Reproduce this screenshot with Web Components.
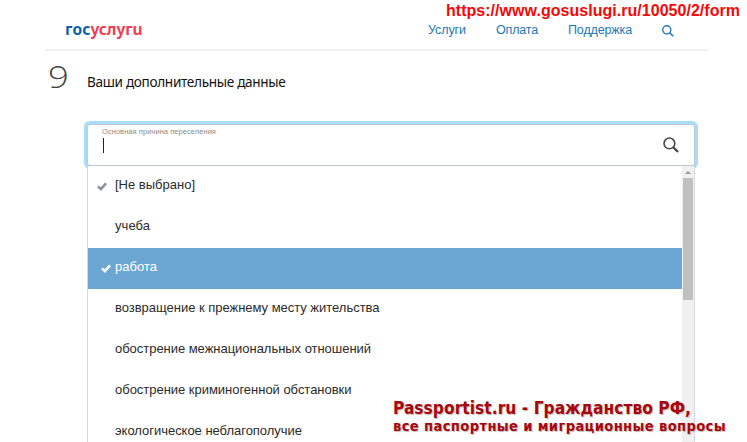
<!DOCTYPE html>
<html lang="ru">
<head>
<meta charset="utf-8">
<title>Госуслуги</title>
<style>
body{margin:0;width:747px;height:442px;overflow:hidden;background:#fff;font-family:"Liberation Sans",Arial,sans-serif}
</style>
</head>
<body>
<form-page></form-page>
<script>
const define=(name,html,init)=>customElements.define(name,class extends HTMLElement{
  connectedCallback(){
    if(this.shadowRoot)return;
    const t=document.createElement('template');
    t.innerHTML=html;
    this.attachShadow({mode:'open'}).append(t.content.cloneNode(true));
    if(init)init(this);
  }
});
// Text line whose tracking is adjusted to span the width given in "w".
define('fit-text',`<style>:host{display:block;white-space:nowrap}span{display:inline-block}</style><span><slot></slot></span>`,el=>{
  const s=el.shadowRoot.querySelector('span'),w=+el.getAttribute('w');
  const n=el.textContent.length;
  s.style.letterSpacing=((w-s.getBoundingClientRect().width)/n).toFixed(4)+'px';
});
define('search-icon',`<style>:host{display:block}svg{display:block;width:100%;height:100%}circle{stroke-width:var(--ring,1.5)}path{stroke-width:var(--handle,1.7)}</style>
<svg viewBox="0 0 16 16" fill="none" stroke="currentColor"><circle cx="6.4" cy="6.4" r="5.4"/><path d="M10.3 10.3L15 15"/></svg>`);
define('check-icon',`<style>:host{display:block;width:10px;height:9px}svg{display:block}</style>
<svg width="10" height="9" viewBox="0 0 10 9"><path d="M1 4.4L3.9 7.2L9 1.4" fill="none" stroke="currentColor" stroke-width="2.5"/></svg>`);
define('site-logo',`<style>:host{display:flex;font:bold 15.5px/20px "Noto Sans","Open Sans",sans-serif;margin-top:-1px}.b{color:#0b62b0}.r{color:#ee3f58}</style>
<fit-text class="b" w="25.5">гос</fit-text><fit-text class="r" w="52">услугu</fit-text>`);
define('site-header',`<style>
:host{display:flex;box-sizing:border-box;width:663px;height:51px;margin-left:45px;border-bottom:2px solid #f0f0f0;padding:20px 34px 0 20px;justify-content:space-between;align-items:flex-start}
nav{display:flex;color:#2277bd;font-size:12.5px;line-height:20px}
fit-text+fit-text{margin-left:30px}
search-icon{width:12px;height:12px;margin:5px 0 0 30px;--ring:1.8;--handle:2.1}
</style><site-logo></site-logo><nav><fit-text w="38">Услуги</fit-text><fit-text w="42">Оплата</fit-text><fit-text w="64">Поддержка</fit-text><search-icon></search-icon></nav>`);
define('step-title',`<style>
:host{display:flex;padding:11px 0 0 48px;height:61px;box-sizing:border-box}
.n{width:39px}
.n span{display:inline-block;transform:scaleX(1.18);transform-origin:0 0;font:300 31px/30px "Open Sans","Noto Sans",sans-serif;color:#444;margin-top:-1px}
.t{font:13.6px/20px "Noto Sans","Open Sans",sans-serif;color:#111;margin-top:10px}
</style><div class="n"><span>9</span></div><fit-text class="t" w="198.5">Ваши дополнительные данные</fit-text>`);
define('search-field',`<style>
:host{display:flex;box-sizing:border-box;width:608px;height:42px;margin-left:87px;border:1px solid #bcc9d2;border-radius:3px;box-shadow:0 0 0 3px #a8dcfd;background:#fff;justify-content:space-between;padding:3px 15px 0 14px;margin-top:12px}
.l{font-size:7.5px;line-height:9px;color:#8b8b8b;margin-top:-1px}
.c{width:1px;height:15px;background:#222;margin:2px 0 0 1px}
search-icon{width:16px;height:16px;margin-top:9px;color:#484848;--ring:1.6;--handle:2.3}
</style><div><fit-text class="l" w="114">Основная причина переселения</fit-text><div class="c"></div></div><search-icon></search-icon>`);
define('list-option',`<style>
:host{display:flex;box-sizing:border-box;height:41px;color:#2b2b2b;font-size:13px;line-height:37px;padding-bottom:4px;align-items:center}
:host([active]){background:#6ba7d2;color:#fff}
.m{width:27px;display:flex;box-sizing:border-box;padding:3px 0 0 9px;color:#87939a}
:host([active]) .m{color:#fff;padding-left:13px}
</style><div class="m"><slot name="mark"></slot></div><slot></slot>`);
define('scroll-bar',`<style>
:host{display:flex;flex-direction:column;align-items:center;width:12px;background:#f0f0f0}
.u{width:0;height:0;border:3px solid transparent;border-top:0;border-bottom:3px solid #999;margin:5px 0 4px}
.t{width:10px;height:122px;background:#c0c0c0}
</style><div class="u"></div><div class="t"></div>`);
define('option-list',`<style>
:host{display:flex;box-sizing:border-box;position:relative;width:608px;height:277px;margin-left:87px;overflow:hidden;border:1px solid #d4d8da;border-top-color:#bcc9d2;border-bottom:0;background:#fff;margin-top:-1px}
.o{flex:1;min-width:0}
</style><div class="o"><slot></slot></div><scroll-bar></scroll-bar>`);
define('water-mark',`<style>
:host{display:block;position:absolute;font-weight:bold}
:host([kind=url]){left:446px;top:1px;font-size:16px;line-height:20px;color:#fb0505}
:host([kind=site]){left:393px;top:399px;color:#a9060d;text-shadow:1px 1px 1px #bbb}
</style><slot></slot>`);
define('form-page',`<style>
:host{display:block;position:relative;width:747px;height:442px;overflow:hidden}
.a{font:bold 17.2px/19px "DejaVu Sans Condensed","DejaVu Sans",sans-serif;font-stretch:condensed}
.b{font:bold 14.6px/17px "DejaVu Sans Condensed","DejaVu Sans",sans-serif;font-stretch:condensed;margin-top:-1px}
</style>
<site-header></site-header>
<step-title></step-title>
<search-field></search-field>
<option-list>
<list-option><check-icon slot="mark"></check-icon><fit-text w="80">[Не выбрано]</fit-text></list-option>
<list-option><fit-text w="35">учеба</fit-text></list-option>
<list-option active><check-icon slot="mark"></check-icon><fit-text w="42">работа</fit-text></list-option>
<list-option><fit-text w="264.5">возвращение к прежнему месту жительства</fit-text></list-option>
<list-option><fit-text w="256">обострение межнациональных отношений</fit-text></list-option>
<list-option><fit-text w="236.5">обострение криминогенной обстановки</fit-text></list-option>
<list-option><fit-text w="187">экологическое неблагополучие</fit-text></list-option>
</option-list>
<water-mark kind="url"><fit-text w="294">https://www.gosuslugi.ru/10050/2/form</fit-text></water-mark>
<water-mark kind="site"><fit-text class="a" w="298">Passportist.ru - Гражданство РФ,</fit-text><fit-text class="b" w="333">все паспортные и миграционные вопросы</fit-text></water-mark>`);
</script>
</body>
</html>
